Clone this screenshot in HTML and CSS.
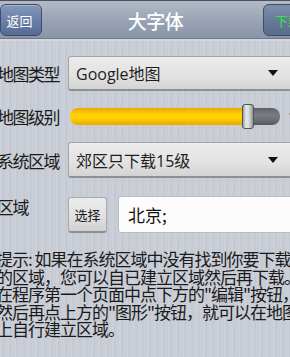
FILE: index.html
```html
<!DOCTYPE html>
<html>
<head>
<meta charset="utf-8">
<link rel="stylesheet" href="styles.css">
</head>
<body>
<div class="screen">
  <header class="titlebar">
    <div class="btn-back">返回</div>
    <div class="title">大字体</div>
    <div class="btn-download">下载</div>
  </header>
  <main class="content">
    <div class="row row-type">
      <div class="label">地图类型</div>
      <div class="spinner"><span class="spinner-text">Google地图</span><span class="arrow"></span></div>
    </div>
    <div class="row row-level">
      <div class="label">地图级别</div>
      <div class="slider">
        <div class="track">
          <div class="fill"></div>
          <div class="rest"></div>
          <div class="thumb"></div>
        </div>
        <span class="slider-value">1</span>
      </div>
    </div>
    <div class="row row-sys">
      <div class="label">系统区域</div>
      <div class="spinner"><span class="spinner-text">郊区只下载15级</span><span class="arrow"></span></div>
    </div>
    <div class="row row-area">
      <div class="label label-area">区域</div>
      <div class="area-controls">
        <div class="btn-choose">选择</div>
        <div class="textfield">北京;</div>
      </div>
    </div>
    <div class="hint">
      <div class="line">提示: 如果在系统区域中没有找到你要下载</div>
      <div class="line">的区域，您可以自已建立区域然后再下载。</div>
      <div class="line">在程序第一个页面中点下方的"编辑"按钮，</div>
      <div class="line">然后再点上方的"图形"按钮，就可以在地图</div>
      <div class="line">上自行建立区域。</div>
    </div>
  </main>
</div>
</body>
</html>
```
FILE: styles.css
```css
* { box-sizing: border-box; }
html, body {
  margin: 0;
  padding: 0;
  width: 290px;
  height: 357px;
  overflow: hidden;
}
body {
  font-family: "Open Sans", "Noto Sans CJK SC", sans-serif;
  background-color: #c9cdd6;
  background-image: repeating-linear-gradient(90deg, rgba(255,255,255,0.05) 0 2px, rgba(0,0,0,0.02) 2px 4px, rgba(255,255,255,0) 4px 7px);
  color: #1e1e1e;
}
.screen {
  width: 290px;
  height: 357px;
  overflow: hidden;
}
.titlebar {
  height: 41px;
  display: flex;
  align-items: center;
  width: 306px;
  background: linear-gradient(#b2bac7 0%, #9aa4b5 50%, #8893a7 100%);
  border-top: 1px solid #4a505c;
  border-bottom: 2px solid #d2d6de;
  box-shadow: inset 0 -1px 0 #6f7a8e;
}
.btn-back {
  width: 42px;
  height: 32px;
  border: 1px solid #3e4c66;
  border-radius: 6px;
  background: linear-gradient(#8498b9 0%, #6a80a6 50%, #546c96 100%);
  color: #fff;
  font-family: "Noto Sans CJK SC", sans-serif;
  font-size: 13px;
  display: flex;
  align-items: center;
  justify-content: center;
  padding-right: 3px;
  box-shadow: inset 0 1px 0 rgba(255,255,255,0.3);
}
.title {
  flex: 1;
  text-align: center;
  color: #fff;
  font-family: "Noto Sans CJK SC", sans-serif;
  font-size: 19px;
  font-weight: 500;
  letter-spacing: -0.5px;
  padding-left: 6px;
}
.btn-download {
  width: 43px;
  height: 32px;
  border: 1px solid #3e4c66;
  border-radius: 6px;
  background: linear-gradient(#7d8fac 0%, #687a98 50%, #5b6d8c 100%);
  color: #2ee83a;
  font-family: "Noto Sans CJK SC", sans-serif;
  font-size: 13px;
  display: flex;
  align-items: center;
  padding-left: 11px;
  white-space: nowrap;
}
.content {
  margin-left: -3px;
  width: 310px;
}
.row {
  display: grid;
  grid-template-columns: 71px 1fr;
  align-items: center;
}
.label {
  font-family: "Noto Sans CJK SC", sans-serif;
  font-size: 17px;
  color: #1a1a1a;
  white-space: nowrap;
  letter-spacing: -1.5px;
}
.row-type { margin-top: 15px; }
.spinner {
  height: 35px;
  width: 230px;
  border: 1px solid #a4a6aa;
  border-bottom: 2px solid #8e9094;
  border-radius: 3px;
  background: linear-gradient(#ebebeb 0%, #e2e2e2 60%, #d3d3d3 100%);
  display: flex;
  align-items: center;
  justify-content: space-between;
  padding: 0 19px 0 7px;
}
.spinner-text {
  font-size: 16px;
  color: #1e1e1e;
  font-family: "Open Sans", "Noto Sans CJK SC", sans-serif;
}
.arrow {
  width: 0;
  height: 0;
  border-left: 5px solid transparent;
  border-right: 5px solid transparent;
  border-top: 6px solid #111;
}
.row-level { margin-top: 12px; height: 26px; }
.slider {
  display: flex;
  align-items: center;
}
.track {
  position: relative;
  display: flex;
  width: 210px;
  height: 17px;
  margin-left: 2px;
}
.fill {
  width: 175px;
  height: 17px;
  border-radius: 8px 0 0 8px;
  background: linear-gradient(#eaa800 0%, #ffcf00 35%, #ffd200 60%, #eba600 100%);
}
.rest {
  flex: 1;
  height: 17px;
  border-radius: 0 8px 8px 0;
  background: linear-gradient(#5e6266 0%, #7a7e82 40%, #6c7074 70%, #55595d 100%);
}
.thumb {
  position: absolute;
  left: 172px;
  top: -4px;
  width: 12px;
  height: 25px;
  border: 1px solid #50545a;
  border-radius: 3px;
  background: linear-gradient(90deg, #9a9ea3 0%, #e8e9ea 30%, #d6d8da 60%, #8e9297 100%);
}
.slider-value {
  margin-left: 8px;
  font-size: 14px;
  color: #222;
}
.row-sys { margin-top: 13px; }
.row-sys .spinner { height: 36px; }
.row-area { margin-top: 18px; align-items: start; }
.label-area {
  padding-top: 1px;
  line-height: 20px;
}
.area-controls {
  display: flex;
  align-items: center;
  gap: 11px;
}
.btn-choose {
  width: 39px;
  height: 36px;
  border: 1px solid #a6a8ac;
  border-bottom: 2px solid #8c8e92;
  border-radius: 3px;
  background: linear-gradient(#ececec 0%, #e0e0e0 60%, #d0d0d0 100%);
  font-family: "Noto Sans CJK SC", sans-serif;
  font-size: 13px;
  color: #1a1a1a;
  display: flex;
  align-items: center;
  justify-content: center;
}
.textfield {
  width: 180px;
  height: 37px;
  background: #fcfcfc;
  border: 1px solid #b9bcc2;
  border-radius: 3px;
  display: flex;
  align-items: center;
  padding-left: 9px;
  font-family: "Noto Sans CJK SC", sans-serif;
  font-size: 17px;
  color: #111;
}
.hint {
  margin-top: 17px;
  margin-left: -1px;
  font-family: "Noto Sans CJK SC", sans-serif;
  font-size: 17px;
  line-height: 17.6px;
  color: #1a1a1a;
  white-space: nowrap;
  letter-spacing: -1px;
}
```
